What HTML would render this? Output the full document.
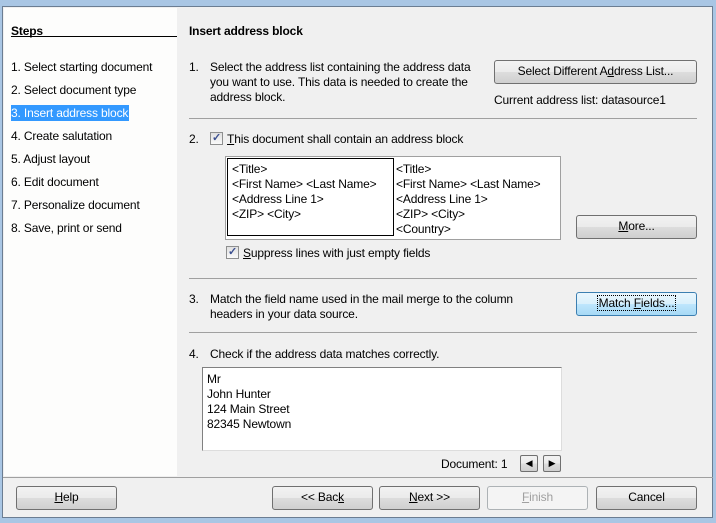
<!DOCTYPE html>
<html><head><meta charset="utf-8"><style>
*{margin:0;padding:0;box-sizing:border-box}
body{width:716px;height:523px;overflow:hidden;background:#a9c6e4;font-family:"Liberation Sans",sans-serif;font-size:12px;color:#000;position:relative;letter-spacing:-0.15px}
.a{position:absolute;white-space:nowrap}
.win{position:absolute;left:2px;top:6px;width:711px;height:512px;background:#f0f0f0;border:1px solid #6b7d92}
.side{position:absolute;left:4px;top:8px;width:173px;height:468px;background:#fdfdfc}
.btn{position:absolute;height:24px;border:1px solid #707070;border-radius:3px;background:linear-gradient(#f2f2f2 0,#ebebeb 50%,#dddddd 51%,#cfcfcf 100%);text-align:center;line-height:21px;font-size:12px}
.hr{position:absolute;height:1px;background:#a0a0a0}
.cb{position:absolute;width:13px;height:13px;border:1px solid #8e8f8f;background:linear-gradient(#e0e0e0,#fafafa);font-size:11px;line-height:11px;text-align:center;color:#3b4f90;font-weight:bold}
u{text-decoration:underline}
.box{position:absolute;background:#fff;border:1px solid #a0a0a0}
</style></head><body>
<div class="win"></div>
<div class="side"></div>
<div class="a" style="left:11px;top:24px;font-weight:bold">Steps</div>
<div class="hr" style="left:11px;top:36px;width:166px;background:#000"></div>
<div class="a" style="left:11px;top:60px">1. Select starting document</div>
<div class="a" style="left:11px;top:83px">2. Select document type</div>
<div class="a" style="left:11px;top:105px;height:16px;background:#3399ff;color:#fff;padding:1px 1px 0 0">3. Insert address block</div>
<div class="a" style="left:11px;top:129px">4. Create salutation</div>
<div class="a" style="left:11px;top:152px">5. Adjust layout</div>
<div class="a" style="left:11px;top:175px">6. Edit document</div>
<div class="a" style="left:11px;top:198px">7. Personalize document</div>
<div class="a" style="left:11px;top:221px">8. Save, print or send</div>

<div class="a" style="left:189px;top:24px;font-weight:bold">Insert address block</div>
<div class="a" style="left:189px;top:60px">1.</div>
<div class="a" style="left:210px;top:60px;line-height:15px">Select the address list containing the address data<br>you want to use. This data is needed to create the<br>address block.</div>
<div class="btn" style="left:494px;top:60px;width:203px">Select Different A<u>d</u>dress List...</div>
<div class="a" style="left:494px;top:93px">Current address list: datasource1</div>
<div class="hr" style="left:189px;top:118px;width:508px"></div>

<div class="a" style="left:189px;top:132px">2.</div>
<div class="cb" style="left:210px;top:132px">✓</div>
<div class="a" style="left:227px;top:132px"><u>T</u>his document shall contain an address block</div>
<div class="box" style="left:225px;top:156px;width:336px;height:84px"></div>
<div class="a" style="left:227px;top:158px;width:167px;height:78px;border:1px solid #000"></div>
<div class="a" style="left:232px;top:162px;line-height:15px">&lt;Title&gt;<br>&lt;First Name&gt; &lt;Last Name&gt;<br>&lt;Address Line 1&gt;<br>&lt;ZIP&gt; &lt;City&gt;</div>
<div class="a" style="left:396px;top:162px;line-height:15px">&lt;Title&gt;<br>&lt;First Name&gt; &lt;Last Name&gt;<br>&lt;Address Line 1&gt;<br>&lt;ZIP&gt; &lt;City&gt;<br>&lt;Country&gt;</div>
<div class="btn" style="left:576px;top:215px;width:121px"><u>M</u>ore...</div>
<div class="cb" style="left:226px;top:246px">✓</div>
<div class="a" style="left:243px;top:246px"><u>S</u>uppress lines with just empty fields</div>
<div class="hr" style="left:189px;top:278px;width:508px"></div>

<div class="a" style="left:189px;top:292px">3.</div>
<div class="a" style="left:210px;top:292px;line-height:15px">Match the field name used in the mail merge to the column<br>headers in your data source.</div>
<div class="btn" style="left:576px;top:292px;width:121px;border-color:#3c7fb1;background:linear-gradient(#eaf6fd,#d9f0fc 50%,#bee6fd 51%,#a7d9f5)"><span style="border:1px dotted #000;padding:0 1px">Match <u>F</u>ields...</span></div>
<div class="hr" style="left:189px;top:332px;width:508px"></div>

<div class="a" style="left:189px;top:347px">4.</div>
<div class="a" style="left:210px;top:347px">Check if the address data matches correctly.</div>
<div class="box" style="left:202px;top:367px;width:360px;height:84px;border-color:#808080 #ddd #ddd #808080"></div>
<div class="a" style="left:207px;top:372px;line-height:15px">Mr<br>John Hunter<br>124 Main Street<br>82345 Newtown</div>
<div class="a" style="left:441px;top:457px">Document: 1</div>
<div class="btn" style="left:520px;top:455px;width:18px;height:17px;border-radius:2px;font-size:9px;line-height:15px">◀</div>
<div class="btn" style="left:543px;top:455px;width:18px;height:17px;border-radius:2px;font-size:9px;line-height:15px">▶</div>

<div class="hr" style="left:3px;top:477px;width:710px;background:#a0a0a0"></div>
<div class="btn" style="left:16px;top:486px;width:101px"><u>H</u>elp</div>
<div class="btn" style="left:272px;top:486px;width:101px">&lt;&lt; Bac<u>k</u></div>
<div class="btn" style="left:379px;top:486px;width:101px"><u>N</u>ext &gt;&gt;</div>
<div class="btn" style="left:487px;top:486px;width:101px;border-color:#adb2b5;background:#f4f4f4;color:#a0a0a0"><u>F</u>inish</div>
<div class="btn" style="left:596px;top:486px;width:101px">Cancel</div>
</body></html>
